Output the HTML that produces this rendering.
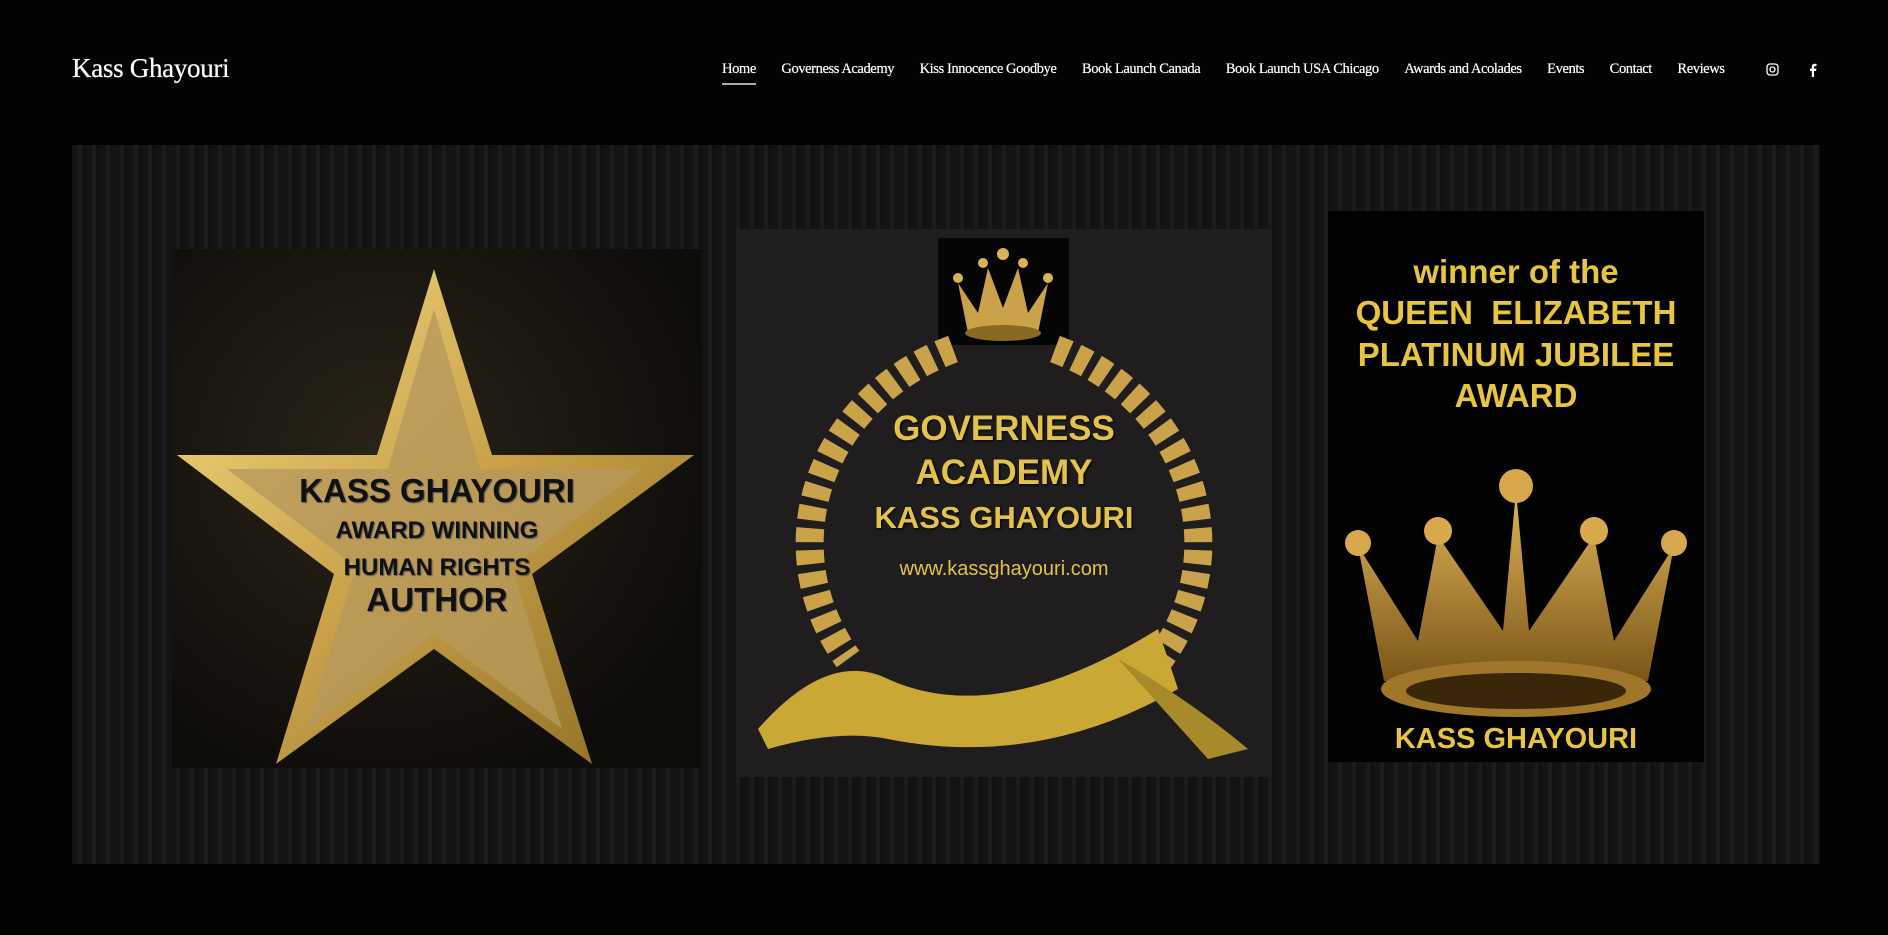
<!DOCTYPE html>
<html><head><meta charset="utf-8"><style>
*{margin:0;padding:0;box-sizing:border-box}
body{width:1888px;height:935px;background:#030303;overflow:hidden;font-family:"Liberation Serif",serif;position:relative}
.logo{position:absolute;left:72px;top:53px;color:#fff;font-size:27px;letter-spacing:-0.3px;text-shadow:0 0 0.6px #fff}
.nav{position:absolute;top:61px;left:722px;display:flex;color:#fff;font-size:14.6px;letter-spacing:-0.45px;text-shadow:0 0 0.5px #fff}
.nav span{margin-right:25.5px;white-space:nowrap}
.nav span.a{position:relative}
.nav span.a:after{content:"";position:absolute;left:0;right:0;bottom:-7px;height:2px;background:#aaa}
.ic{position:absolute;top:63px;color:#fff}
.hero{position:absolute;left:72px;top:145px;width:1748px;height:719px;background:repeating-linear-gradient(90deg,#141414 0 6px,#1c1c1c 6px 10px,#121212 10px 14px);}
.p{position:absolute;font-family:"Liberation Sans",sans-serif;font-weight:bold;text-align:center}
.gold{color:#e6c34a;text-shadow:1px 1px 2px #000}
</style></head><body>
<div class="logo">Kass Ghayouri</div>
<div class="nav"><span class="a">Home</span><span>Governess Academy</span><span>Kiss Innocence Goodbye</span><span>Book Launch Canada</span><span>Book Launch USA Chicago</span><span>Awards and Acolades</span><span>Events</span><span>Contact</span><span>Reviews</span></div>
<svg class="ic" style="left:1766px" width="13" height="13" viewBox="0 0 13 13"><rect x="1" y="1" width="11" height="11" rx="3" fill="none" stroke="#fff" stroke-width="1.3"/><circle cx="6.5" cy="6.5" r="2.5" fill="none" stroke="#fff" stroke-width="1.3"/></svg>
<svg class="ic" style="left:1809px" width="8" height="14" viewBox="0 0 8 14"><path d="M5 14V8h2l.4-2.4H5V4.3c0-.7.3-1.2 1.2-1.2h1.3V1C7.2.9 6.5.8 5.8.8 4 .8 2.8 1.9 2.8 3.9v1.7H1V8h1.8v6z" fill="#fff"/></svg>
<div class="hero"></div>
<!-- panel 1 -->
<div class="p" style="left:172px;top:249px;width:530px;height:519px;background:radial-gradient(ellipse at 40% 40%,#2a2418,#0f0d0a 75%)">
<svg width="530" height="519" viewBox="0 0 530 519" style="position:absolute;left:0;top:0"><defs><linearGradient id="g" x1="0" y1="0" x2="1" y2="1"><stop offset="0" stop-color="#f5dc86"/><stop offset=".5" stop-color="#c9a24a"/><stop offset="1" stop-color="#8a6a22"/></linearGradient></defs>
<polygon points="262,20 320,206 522,206 360,325 420,515 262,400 104,515 162,325 5,206 205,206" fill="url(#g)"/>
<polygon points="262,60 308,220 470,220 340,318 390,480 262,385 134,480 184,318 55,220 216,220" fill="#b8995a" opacity=".8"/></svg>
<div style="position:absolute;top:224px;left:0;width:530px;color:#111;font-size:33px;line-height:1.1;text-shadow:1px 1px 1px #555">KASS GHAYOURI<br><span style="font-size:24px">AWARD WINNING<br>HUMAN RIGHTS</span><br><span style="font-size:33px">AUTHOR</span></div></div>
<!-- panel 2 -->
<div class="p" style="left:738px;top:229px;width:532px;height:548px;background:#1f1d1d">
<div style="position:absolute;left:200px;top:9px;width:131px;height:107px;background:#050505">
<svg width="131" height="107" viewBox="0 0 131 107"><path d="M20 45 L40 75 L50 30 L65 70 L80 30 L90 75 L110 45 L100 95 L30 95 Z" fill="#c9a24a"/><circle cx="65" cy="16" r="6" fill="#d9b356"/><circle cx="20" cy="40" r="5" fill="#d9b356"/><circle cx="110" cy="40" r="5" fill="#d9b356"/><circle cx="45" cy="25" r="5" fill="#d9b356"/><circle cx="85" cy="25" r="5" fill="#d9b356"/><ellipse cx="65" cy="95" rx="38" ry="8" fill="#8a6a22"/></svg></div>
<svg width="532" height="548" viewBox="0 0 532 548" style="position:absolute;left:0;top:0"><path d="M215 120 C80 170 30 320 110 430" fill="none" stroke="#c9a24a" stroke-width="28" stroke-dasharray="14 8"/><path d="M317 120 C452 170 502 320 422 430" fill="none" stroke="#c9a24a" stroke-width="28" stroke-dasharray="14 8"/><path d="M20 500 Q90 420 150 450 Q260 500 420 400 L440 460 Q300 540 150 510 Q100 500 30 520Z" fill="#c9a836"/><path d="M380 430 Q450 470 510 520 L470 530 Z" fill="#a88a2a"/></svg>
<div class="gold" style="position:absolute;top:178px;width:532px;font-size:35px;line-height:1.25;color:#e3c24c">GOVERNESS<br>ACADEMY<br><span style="font-size:31px">KASS GHAYOURI</span></div>
<div style="position:absolute;top:329px;width:532px;font-size:20px;color:#e3c24c;font-weight:normal">www.kassghayouri.com</div></div>
<!-- panel 3 -->
<div class="p" style="left:1328px;top:211px;width:376px;height:551px;background:#020202">
<div style="position:absolute;top:40px;width:376px;font-size:33px;line-height:1.25;color:#e8c443">winner of the<br>QUEEN&nbsp; ELIZABETH<br>PLATINUM JUBILEE<br>AWARD</div>
<svg width="376" height="551" viewBox="0 0 376 551" style="position:absolute;left:0;top:0"><defs><linearGradient id="c" x1="0" y1="0" x2="0" y2="1"><stop offset="0" stop-color="#e0b65a"/><stop offset="1" stop-color="#7a5518"/></linearGradient></defs>
<path d="M30 335 L90 430 L110 325 L175 420 L188 280 L201 420 L266 325 L286 430 L346 335 L320 470 L56 470 Z" fill="url(#c)"/>
<ellipse cx="188" cy="478" rx="135" ry="28" fill="#a07628"/><ellipse cx="188" cy="480" rx="110" ry="18" fill="#3a2608"/>
<circle cx="188" cy="275" r="17" fill="#d7a84c"/><circle cx="110" cy="320" r="14" fill="#d7a84c"/><circle cx="266" cy="320" r="14" fill="#d7a84c"/><circle cx="30" cy="332" r="13" fill="#d7a84c"/><circle cx="346" cy="332" r="13" fill="#d7a84c"/></svg>
<div style="position:absolute;top:512px;width:376px;font-size:29px;color:#e8c443">KASS GHAYOURI</div></div>
</body></html>
